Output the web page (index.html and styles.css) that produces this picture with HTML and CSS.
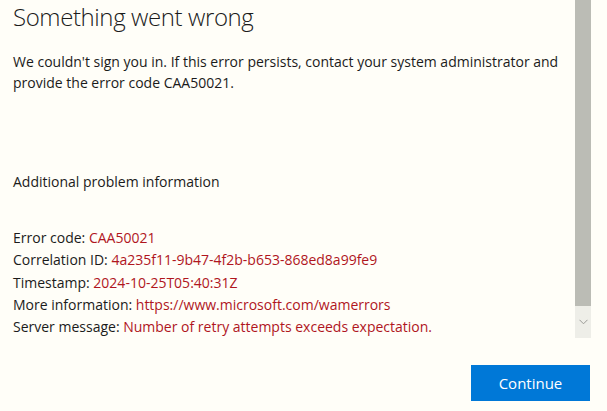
FILE: index.html
```html
<!DOCTYPE html>
<html lang="en">
<head>
<meta charset="utf-8">
<title>Something went wrong</title>
<link rel="stylesheet" href="styles.css">
</head>
<body>
<div class="dialog">
  <div class="scroll-area">
    <div class="content">
      <h1 class="title">Something went wrong</h1>
      <p class="message">We couldn't sign you in. If this error persists, contact your system administrator and provide the error code CAA50021.</p>
      <h2 class="subhead">Additional problem information</h2>
      <div class="details">
        <div class="row">Error code: <span class="val">CAA50021</span></div>
        <div class="row">Correlation ID: <span class="val">4a235f11-9b47-4f2b-b653-868ed8a99fe9</span></div>
        <div class="row">Timestamp: <span class="val">2024-10-25T05:40:31Z</span></div>
        <div class="row">More information: <span class="val">https://www.microsoft.com/wamerrors</span></div>
        <div class="row">Server message: <span class="val">Number of retry attempts exceeds expectation.</span></div>
      </div>
    </div>
    <div class="scrollbar">
      <div class="thumb"></div>
      <div class="arrow">
        <svg width="9" height="6" viewBox="0 0 9 6"><path d="M0.5 0.8 L4.5 4.8 L8.5 0.8" fill="none" stroke="#9a9a96" stroke-width="1"/></svg>
      </div>
    </div>
  </div>
  <div class="footer">
    <button class="btn-primary">Continue</button>
  </div>
</div>
</body>
</html>
```
FILE: styles.css
```css
html, body {
  margin: 0;
  padding: 0;
}
body {
  background: #fffef8;
  font-family: "Open Sans", "Noto Sans", sans-serif;
  color: #1b1b1b;
  width: 607px;
  height: 411px;
  overflow: hidden;
}
.dialog {
  display: flex;
  flex-direction: column;
  height: 411px;
}
.scroll-area {
  display: flex;
  height: 338px;
}
.content {
  flex: 1;
  padding: 0 13px;
  overflow: hidden;
}
.title {
  margin: 0;
  padding-top: 3px;
  font-size: 24px;
  font-weight: 300;
  line-height: 27px;
  letter-spacing: -0.4px;
}
.message {
  margin: 21px 0 0 0;
  font-size: 14px;
  line-height: 21px;
}
.subhead {
  margin: 78px 0 0 0;
  font-size: 14px;
  font-weight: 400;
  line-height: 22px;
}
.details {
  margin-top: 34px;
  font-size: 14px;
  line-height: 22.25px;
}
.val {
  color: #b0161e;
}
.scrollbar {
  width: 16px;
  margin-right: 16px;
  display: flex;
  flex-direction: column;
}
.thumb {
  flex: 1;
  background: #bbbcb5;
}
.arrow {
  height: 32px;
  background: #eeeee8;
  display: flex;
  align-items: center;
  justify-content: center;
}
.footer {
  display: flex;
  justify-content: flex-end;
  padding: 27px 17px 0 0;
}
.btn-primary {
  width: 119px;
  height: 36px;
  border: none;
  background: #0078d7;
  color: #ffffff;
  font-family: "Open Sans", "Noto Sans", sans-serif;
  font-size: 15px;
  padding: 0;
}
```
